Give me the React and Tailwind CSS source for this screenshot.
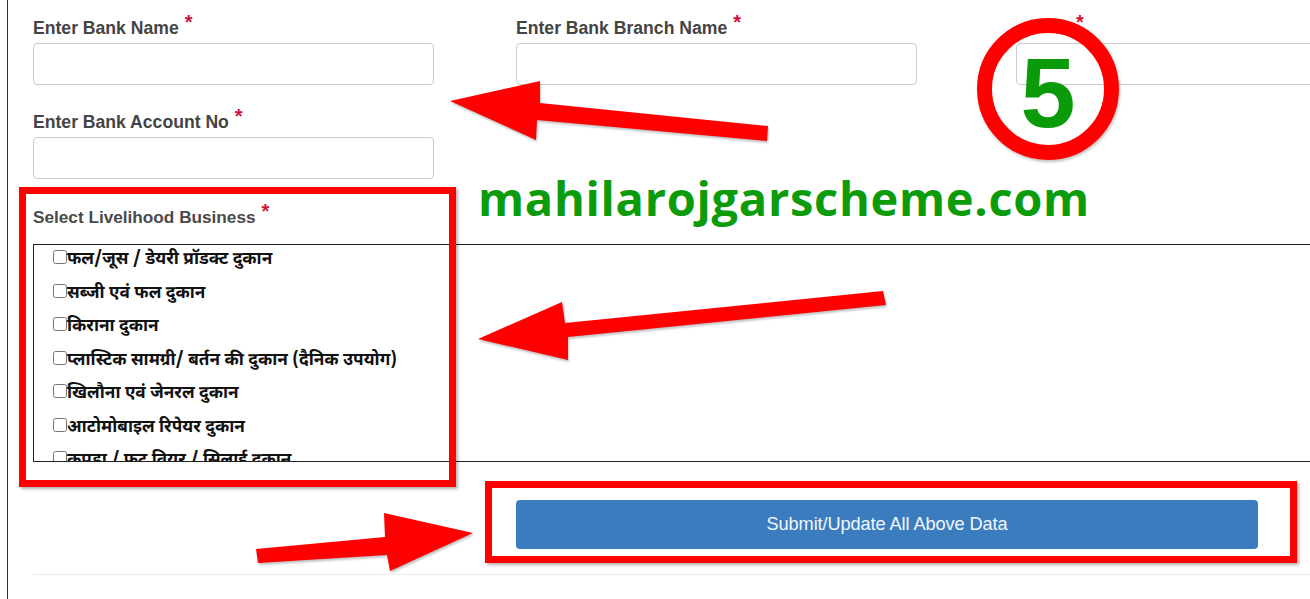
import React from "react";

const FIELDS_TOP = [
    { label: "Enter Bank Name", className: "w-[401px]" },
    { label: "Enter Bank Branch Name", className: "ml-[82px] w-[401px]" },
    { label: "", className: "ml-[99px] w-[400px] shrink-0" },
];

const BUSINESSES = [
    "फल/जूस / डेयरी प्रॉडक्ट दुकान",
    "सब्जी एवं फल दुकान",
    "किराना दुकान",
    "प्लास्टिक सामग्री/ बर्तन की दुकान (दैनिक उपयोग)",
    "खिलौना एवं जेनरल दुकान",
    "आटोमोबाइल रिपेयर दुकान",
    "कपड़ा / फुट वियर / सिलाई दुकान",
    "मोबाइल रिपेयर दुकान",
];

// Red "required" star next to a label
function Star() {
    return (
        <span className="relative top-[-5px] ml-[6px] text-[20px] leading-none text-[#d0103a]">*</span>
    );
}

function Label({ children, className = "" }) {
    return (
        <div className={`h-[20px] leading-[20px] font-bold whitespace-nowrap ${className}`}>
            {children}
            <Star />
        </div>
    );
}

function Field({ label, className }) {
    return (
        <div className={className}>
            <Label className={`text-[17.6px] text-[#444] ${label ? "" : "pl-[54px]"}`}>{label}</Label>
            <div className="mt-[6px] h-[42px] rounded-[4px] border border-[#cccccc] bg-white" />
        </div>
    );
}

// Annotation arrows drawn over the form
function Arrows() {
    return (
        <svg
            className="pointer-events-none absolute left-0 top-0 drop-shadow-[1px_2px_1px_rgba(0,0,0,0.25)]"
            width="1310"
            height="599"
            viewBox="0 0 1310 599"
        >
            <polygon fill="#ff0000" points="450,101 540,81 540,103 768,126 767,141 537,120 536,140" />
            <polygon fill="#ff0000" points="478,339 562,302 565,323 883,291 886,305 568,337 568,360" />
            <polygon fill="#ff0000" points="473,533 384,513 385,537 256,549 258,563 387,555 390,571" />
        </svg>
    );
}

export default function App() {
    return (
        <div className="relative h-[599px] w-[1310px] overflow-hidden bg-white font-['Liberation_Sans',Arial,sans-serif]">
            <div className="flex h-full">
                <div className="w-[7px] shrink-0" />
                <div className="w-px shrink-0 bg-[#333]" />
                <div className="flex-1 pl-[25px]">
                    {/* Row 1 */}
                    <div className="flex pt-[17px]">
                        {FIELDS_TOP.map((f, i) => (
                            <Field key={i} label={f.label} className={f.className} />
                        ))}
                    </div>

                    {/* Row 2 */}
                    <div className="mt-[26px] flex">
                        <Field label="Enter Bank Account No" className="w-[401px]" />
                    </div>

                    {/* Livelihood list */}
                    <Label className="mt-[27px] text-[17.2px] text-[#4a4a4a]">Select Livelihood Business</Label>
                    <div className="mt-[18px] h-[218px] w-[1300px] overflow-hidden border border-[#222] pl-[19px] pt-[4px]">
                        {BUSINESSES.map((b) => (
                            <label
                                key={b}
                                className="flex h-[33.5px] items-start font-['Noto_Sans_Devanagari','Noto_Sans',sans-serif] text-[17.2px] font-bold text-[#111]"
                            >
                                <input type="checkbox" className="m-0 mt-[1px] h-[14px] w-[14px] shrink-0" />
                                <span className="mt-[-1px] whitespace-nowrap leading-[24px]">{b}</span>
                            </label>
                        ))}
                    </div>

                    {/* Submit */}
                    <button className="ml-[483px] mt-[38px] block h-[49px] w-[742px] rounded-[4px] bg-[#3b7cbf] text-[18.2px] tracking-[-0.1px] text-[#f2f8ff]">
                        Submit/Update All Above Data
                    </button>
                    <div className="mt-[25px] h-px bg-[#ececec]" />
                </div>
            </div>

            {/* Annotations */}
            <div className="pointer-events-none absolute left-[19px] top-[187px] h-[300px] w-[437px] border-[7px] border-[#ff0000] shadow-[2px_2px_3px_rgba(0,0,0,0.3)]" />
            <div className="pointer-events-none absolute left-[485px] top-[481px] h-[82px] w-[812px] border-[7px] border-[#ff0000] shadow-[2px_2px_3px_rgba(0,0,0,0.3)]" />
            <Arrows />
            <div className="pointer-events-none absolute left-[977px] top-[18px] flex h-[142px] w-[142px] items-center justify-center rounded-full border-[15px] border-[#ff0000] shadow-[1px_2px_3px_rgba(0,0,0,0.25)]">
                <span className="mt-[6px] text-[99px] font-bold leading-none text-[#0a9a0a]">5</span>
            </div>
            <div className="pointer-events-none absolute left-[478px] top-[175px] whitespace-nowrap font-['Open_Sans',sans-serif] text-[47px] font-bold leading-[47px] tracking-[0.7px] text-[#0b9b0b]">
                mahilarojgarscheme.com
            </div>
        </div>
    );
}
